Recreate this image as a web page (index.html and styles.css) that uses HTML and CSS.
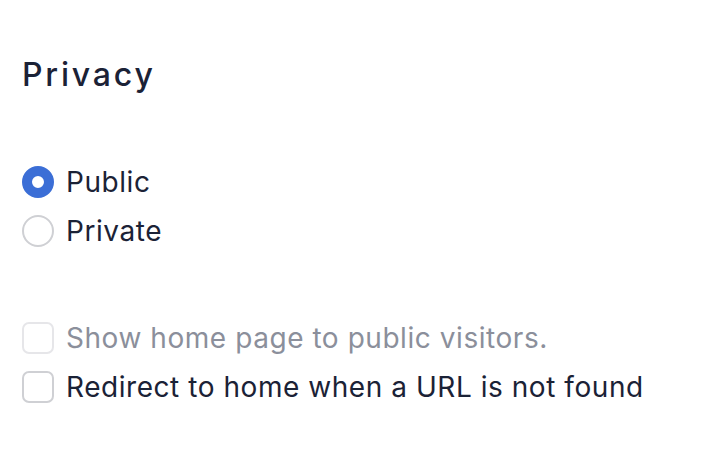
FILE: index.html
```html
<!DOCTYPE html>
<html>
<head>
<meta charset="utf-8">
<link rel="stylesheet" href="styles.css">
</head>
<body>
<section class="panel">
  <h1 class="title">Privacy</h1>
  <div class="group radios">
    <label class="row">
      <span class="radio radio-on"></span>
      <span class="label">Public</span>
    </label>
    <label class="row">
      <span class="radio"></span>
      <span class="label">Private</span>
    </label>
  </div>
  <div class="group checks">
    <label class="row disabled">
      <span class="check"></span>
      <span class="label">Show home page to public visitors.</span>
    </label>
    <label class="row">
      <span class="check"></span>
      <span class="label">Redirect to home when a URL is not found</span>
    </label>
  </div>
</section>
</body>
</html>
```
FILE: styles.css
```css
html, body {
  margin: 0;
  padding: 0;
  background: #ffffff;
}
body {
  font-family: "Inter", "Noto Sans", sans-serif;
  color: #1b2236;
}
.panel {
  padding: 53px 22px 0 22px;
  display: flex;
  flex-direction: column;
}
.title {
  margin: 0;
  font-size: 32px;
  line-height: 44px;
  font-weight: 500;
  letter-spacing: 2.8px;
  color: #1b2236;
}
.group {
  display: flex;
  flex-direction: column;
  gap: 17px;
}
.radios {
  margin-top: 69px;
}
.checks {
  margin-top: 75px;
}
.row {
  display: flex;
  align-items: center;
  gap: 12px;
  height: 32px;
}
.label {
  font-size: 28px;
  line-height: 32px;
  letter-spacing: 0.55px;
}
.radio {
  box-sizing: border-box;
  width: 32px;
  height: 32px;
  border-radius: 50%;
  border: 2px solid #cfd0d4;
  background: #fff;
  flex: none;
}
.radio-on {
  border: 10px solid #3b6ed6;
}
.check {
  box-sizing: border-box;
  width: 32px;
  height: 32px;
  border-radius: 7px;
  border: 2px solid #cfd0d4;
  background: #fff;
  flex: none;
}
.disabled .check {
  border-color: #e6e6e9;
}
.disabled .label {
  color: #8b8f9b;
}
```
